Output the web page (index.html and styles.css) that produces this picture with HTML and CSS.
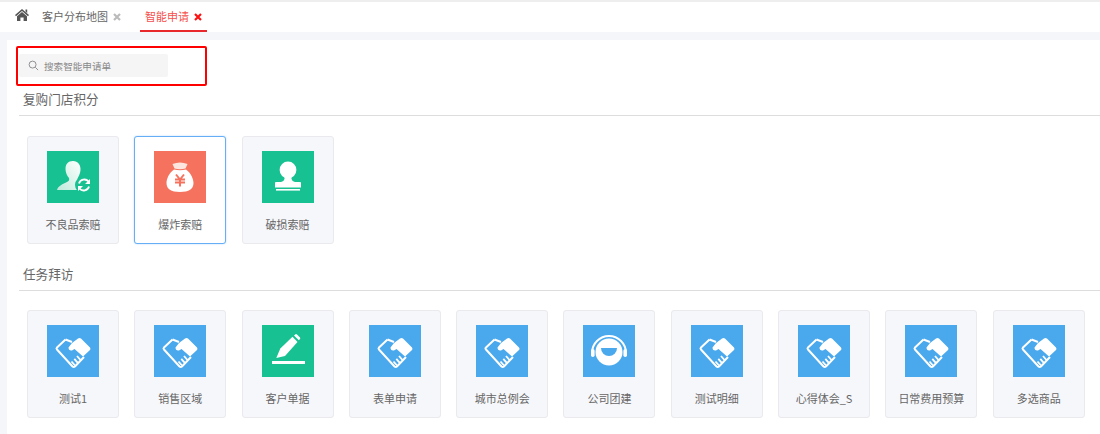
FILE: index.html
```html
<!DOCTYPE html>
<html lang="zh-CN">
<head>
    <meta charset="UTF-8">
    <meta name="viewport" content="width=device-width, initial-scale=1.0">
    <title>智能申请</title>
    <link rel="stylesheet" href="styles.css">
</head>
<body>
    <svg class="defs" width="0" height="0">
        <symbol id="shake" viewBox="0 0 52 52">
            <path d="M18.5 14.5 L10 22.5 Q9 23.5 10 24.5 L25.5 41.5 Q26.7 42.5 28 41.5 L37 32" fill="none" stroke="#fff" stroke-width="2"/>
            <path d="M18.5 14.5 L25 17" fill="none" stroke="#fff" stroke-width="2"/>
            <path d="M25 18 L31 13.5 Q32.5 12.5 34 13.5 L43 22.5 Q44 24 43 25 L36 31.5 L27.5 24 L25 25.5 Q21.5 26 21.5 22.5 Z" fill="#fff"/>
            <path d="M33.5 35 L30 31 M30.8 37.8 L27.3 33.8 M28 40.5 L24.5 36.5" fill="none" stroke="#fff" stroke-width="1.8"/>
        </symbol>
    </svg>

    <div class="tabbar">
        <svg class="home" viewBox="0 0 14 12">
            <path d="M7 0 L14 6 L13 7.2 L7 2 L1 7.2 L0 6 Z M10.5 .6 H12.2 V4 L10.5 2.6 Z M7 3 L12 7.3 V12 H8.6 V8.4 H5.4 V12 H2 V7.3 Z" fill="#555"/>
        </svg>
        <div class="tab">
            <span>客户分布地图</span>
            <svg class="close" viewBox="0 0 8 8"><path d="M1 1 L7 7 M7 1 L1 7" stroke="#bbb" stroke-width="2.2"/></svg>
        </div>
        <div class="tab active">
            <span>智能申请</span>
            <svg class="close" viewBox="0 0 8 8"><path d="M1 1 L7 7 M7 1 L1 7" stroke="#f11" stroke-width="2.2"/></svg>
        </div>
    </div>

    <div class="main">
        <div class="search-box">
            <div class="search">
                <svg class="search-icon" viewBox="0 0 12 12">
                    <circle cx="5" cy="5" r="3.8" fill="none" stroke="#888" stroke-width="1"/>
                    <path d="M8 8 L11 11" stroke="#888" stroke-width="1"/>
                </svg>
                <span>搜索智能申请单</span>
            </div>
        </div>

        <h3 class="group-title">复购门店积分</h3>
        <div class="cards">
            <div class="card">
                <svg class="icon green" viewBox="0 0 52 52">
                    <defs>
                        <linearGradient id="fade" x1="1" y1="0" x2="0" y2="1">
                            <stop offset="0" stop-color="#fff"/>
                            <stop offset="1" stop-color="#bdeadb"/>
                        </linearGradient>
                    </defs>
                    <path d="M26 10 C31 10 33.5 14 33.5 18 C33.5 23 31 26 30.5 28 L34 31 L30 39 H10 C11 35 16 33 20 31 C22 30 22.5 29 22 27 C20 25 18.5 21 18.5 18 C18.5 13 21 10 26 10 Z" fill="url(#fade)"/>
                    <circle cx="37" cy="34" r="9" fill="#17c191"/>
                    <path d="M32 32.5 A5.5 5.5 0 0 1 41.5 30.5" fill="none" stroke="#fff" stroke-width="1.8"/>
                    <path d="M42 35.5 A5.5 5.5 0 0 1 32.5 37.5" fill="none" stroke="#fff" stroke-width="1.8"/>
                    <path d="M43 28 V33 H38 Z M31 40 V35 H36 Z" fill="#fff"/>
                </svg>
                <div class="name">不良品索赔</div>
            </div>
            <div class="card selected">
                <svg class="icon coral" viewBox="0 0 52 52">
                    <path d="M18.5 13 Q26 10 33.5 13 L31.5 17.5 Q26 19 20.5 17.5 Z" fill="#fde5df"/>
                    <path d="M20 18.5 Q26 20 32 18.5 C37 22 39.5 28 39.5 32 C39.5 38 35 41 26 41 C17 41 12.5 38 12.5 32 C12.5 28 15 22 20 18.5 Z" fill="#fff"/>
                    <path d="M22 23.5 L26 28.5 L30 23.5 M21 28.5 H31 M21 31.5 H31 M26 28.5 V35.5" fill="none" stroke="#f5735e" stroke-width="2"/>
                </svg>
                <div class="name">爆炸索赔</div>
            </div>
            <div class="card">
                <svg class="icon green" viewBox="0 0 52 52">
                    <circle cx="26" cy="19" r="8.4" fill="#fff"/>
                    <path d="M22.5 25 H29.5 V28 Q30 30.5 33 31 H19 Q22 30.5 22.5 28 Z" fill="#fff"/>
                    <path d="M14 31 H38 Q39 31 39 32 V36.5 H13 V32 Q13 31 14 31 Z" fill="#fff"/>
                    <rect x="14" y="38" width="24" height="1.6" fill="#fff"/>
                </svg>
                <div class="name">破损索赔</div>
            </div>
        </div>

        <h3 class="group-title">任务拜访</h3>
        <div class="cards">
            <div class="card">
                <svg class="icon blue"><use href="#shake"/></svg>
                <div class="name">测试1</div>
            </div>
            <div class="card">
                <svg class="icon blue"><use href="#shake"/></svg>
                <div class="name">销售区域</div>
            </div>
            <div class="card">
                <svg class="icon green" viewBox="0 0 52 52">
                    <path d="M14.3 33 L18.3 23.5 L30.5 11.8 L35.5 17 L23 31 Z" fill="#fff"/>
                    <path d="M32 10.5 L33.5 9.2 Q34.3 8.8 35 9.4 L38 12.4 Q38.6 13.2 38 14 L36.8 15.3 Z" fill="#fff"/>
                    <rect x="10" y="36" width="33" height="3" fill="#fff"/>
                </svg>
                <div class="name">客户单据</div>
            </div>
            <div class="card">
                <svg class="icon blue"><use href="#shake"/></svg>
                <div class="name">表单申请</div>
            </div>
            <div class="card">
                <svg class="icon blue"><use href="#shake"/></svg>
                <div class="name">城市总例会</div>
            </div>
            <div class="card">
                <svg class="icon blue" viewBox="0 0 52 52">
                    <path d="M9 28 A17 17 0 0 1 43 28" fill="none" stroke="#fff" stroke-width="2"/>
                    <rect x="8" y="24" width="3.6" height="8" rx="1.8" fill="#fff"/>
                    <rect x="40.4" y="24" width="3.6" height="8" rx="1.8" fill="#fff"/>
                    <circle cx="26" cy="27" r="13.5" fill="#fff"/>
                    <path d="M18 23 H34 A8 8 0 0 1 18 23 Z" fill="#4aa8ec"/>
                </svg>
                <div class="name">公司团建</div>
            </div>
            <div class="card">
                <svg class="icon blue"><use href="#shake"/></svg>
                <div class="name">测试明细</div>
            </div>
            <div class="card">
                <svg class="icon blue"><use href="#shake"/></svg>
                <div class="name">心得体会_S</div>
            </div>
            <div class="card">
                <svg class="icon blue"><use href="#shake"/></svg>
                <div class="name">日常费用预算</div>
            </div>
            <div class="card">
                <svg class="icon blue"><use href="#shake"/></svg>
                <div class="name">多选商品</div>
            </div>
        </div>
    </div>
</body>
</html>
```

FILE: styles.css
```css
body {
    margin: 0;
    background-color: #f5f6fa;
    font-family: "Noto Sans CJK SC", "Liberation Sans", sans-serif;
    color: #666;
    overflow: hidden;
}
.defs {
    display: block;
}
.tabbar {
    display: flex;
    height: 30px;
    padding-left: 15px;
    background-color: #fff;
    border-top: 2px solid #eee;
}
.home {
    width: 14px;
    height: 12px;
    margin-top: 7px;
}
.tab {
    display: flex;
    align-items: center;
    gap: 5px;
    height: 28px;
    margin-left: 13px;
    font-size: 11px;
    color: #666;
}
.tab.active {
    height: 28px;
    margin-left: 19px;
    padding: 0 5px;
    color: #f5504e;
    border-bottom: 2px solid #e8282d;
}
.close {
    width: 8px;
    height: 8px;
    margin-top: 2px;
}
.main {
    margin: 8px 0 0 7px;
    padding: 6px 0 0 9px;
    height: 394px;
    background-color: #fff;
}
.search-box {
    width: 186px;
    height: 30px;
    padding: 6px 0 0 1px;
    border: 2px solid #f00;
    border-radius: 2px;
    margin-bottom: 4px;
}
.search {
    display: flex;
    align-items: center;
    gap: 5px;
    width: 149px;
    height: 23px;
    padding-left: 9px;
    box-sizing: border-box;
    background-color: #f5f5f5;
    border-radius: 2px;
    font-size: 9.6px;
    color: #888;
}
.search-icon {
    width: 11px;
    height: 11px;
}
.group-title {
    margin: 0 0 0 3px;
    padding: 0 0 8px 4px;
    border-bottom: 1px solid #ddd;
    font-size: 12.6px;
    font-weight: normal;
    line-height: 17px;
    color: #666;
}
.cards {
    display: flex;
    gap: 15.3px;
    padding: 20px 0 0 11px;
    margin-bottom: 21px;
}
.cards + .group-title + .cards {
    padding-top: 19px;
}
.card {
    display: flex;
    flex-direction: column;
    align-items: center;
    flex: none;
    width: 92px;
    height: 108px;
    box-sizing: border-box;
    padding-top: 14px;
    background-color: #f6f7fb;
    border: 1px solid #e9e9ee;
    border-radius: 3px;
}
.card.selected {
    background-color: #fff;
    border-color: #66aef5;
    box-shadow: 0 0 2px #b5d8fa;
}
.icon {
    display: block;
    width: 52px;
    height: 52px;
}
.green {
    background-color: #17c191;
}
.coral {
    background-color: #f5735e;
}
.blue {
    background-color: #4aa8ec;
}
.name {
    margin-top: 13px;
    font-size: 11px;
    line-height: 16px;
    color: #666;
    white-space: nowrap;
}
```
